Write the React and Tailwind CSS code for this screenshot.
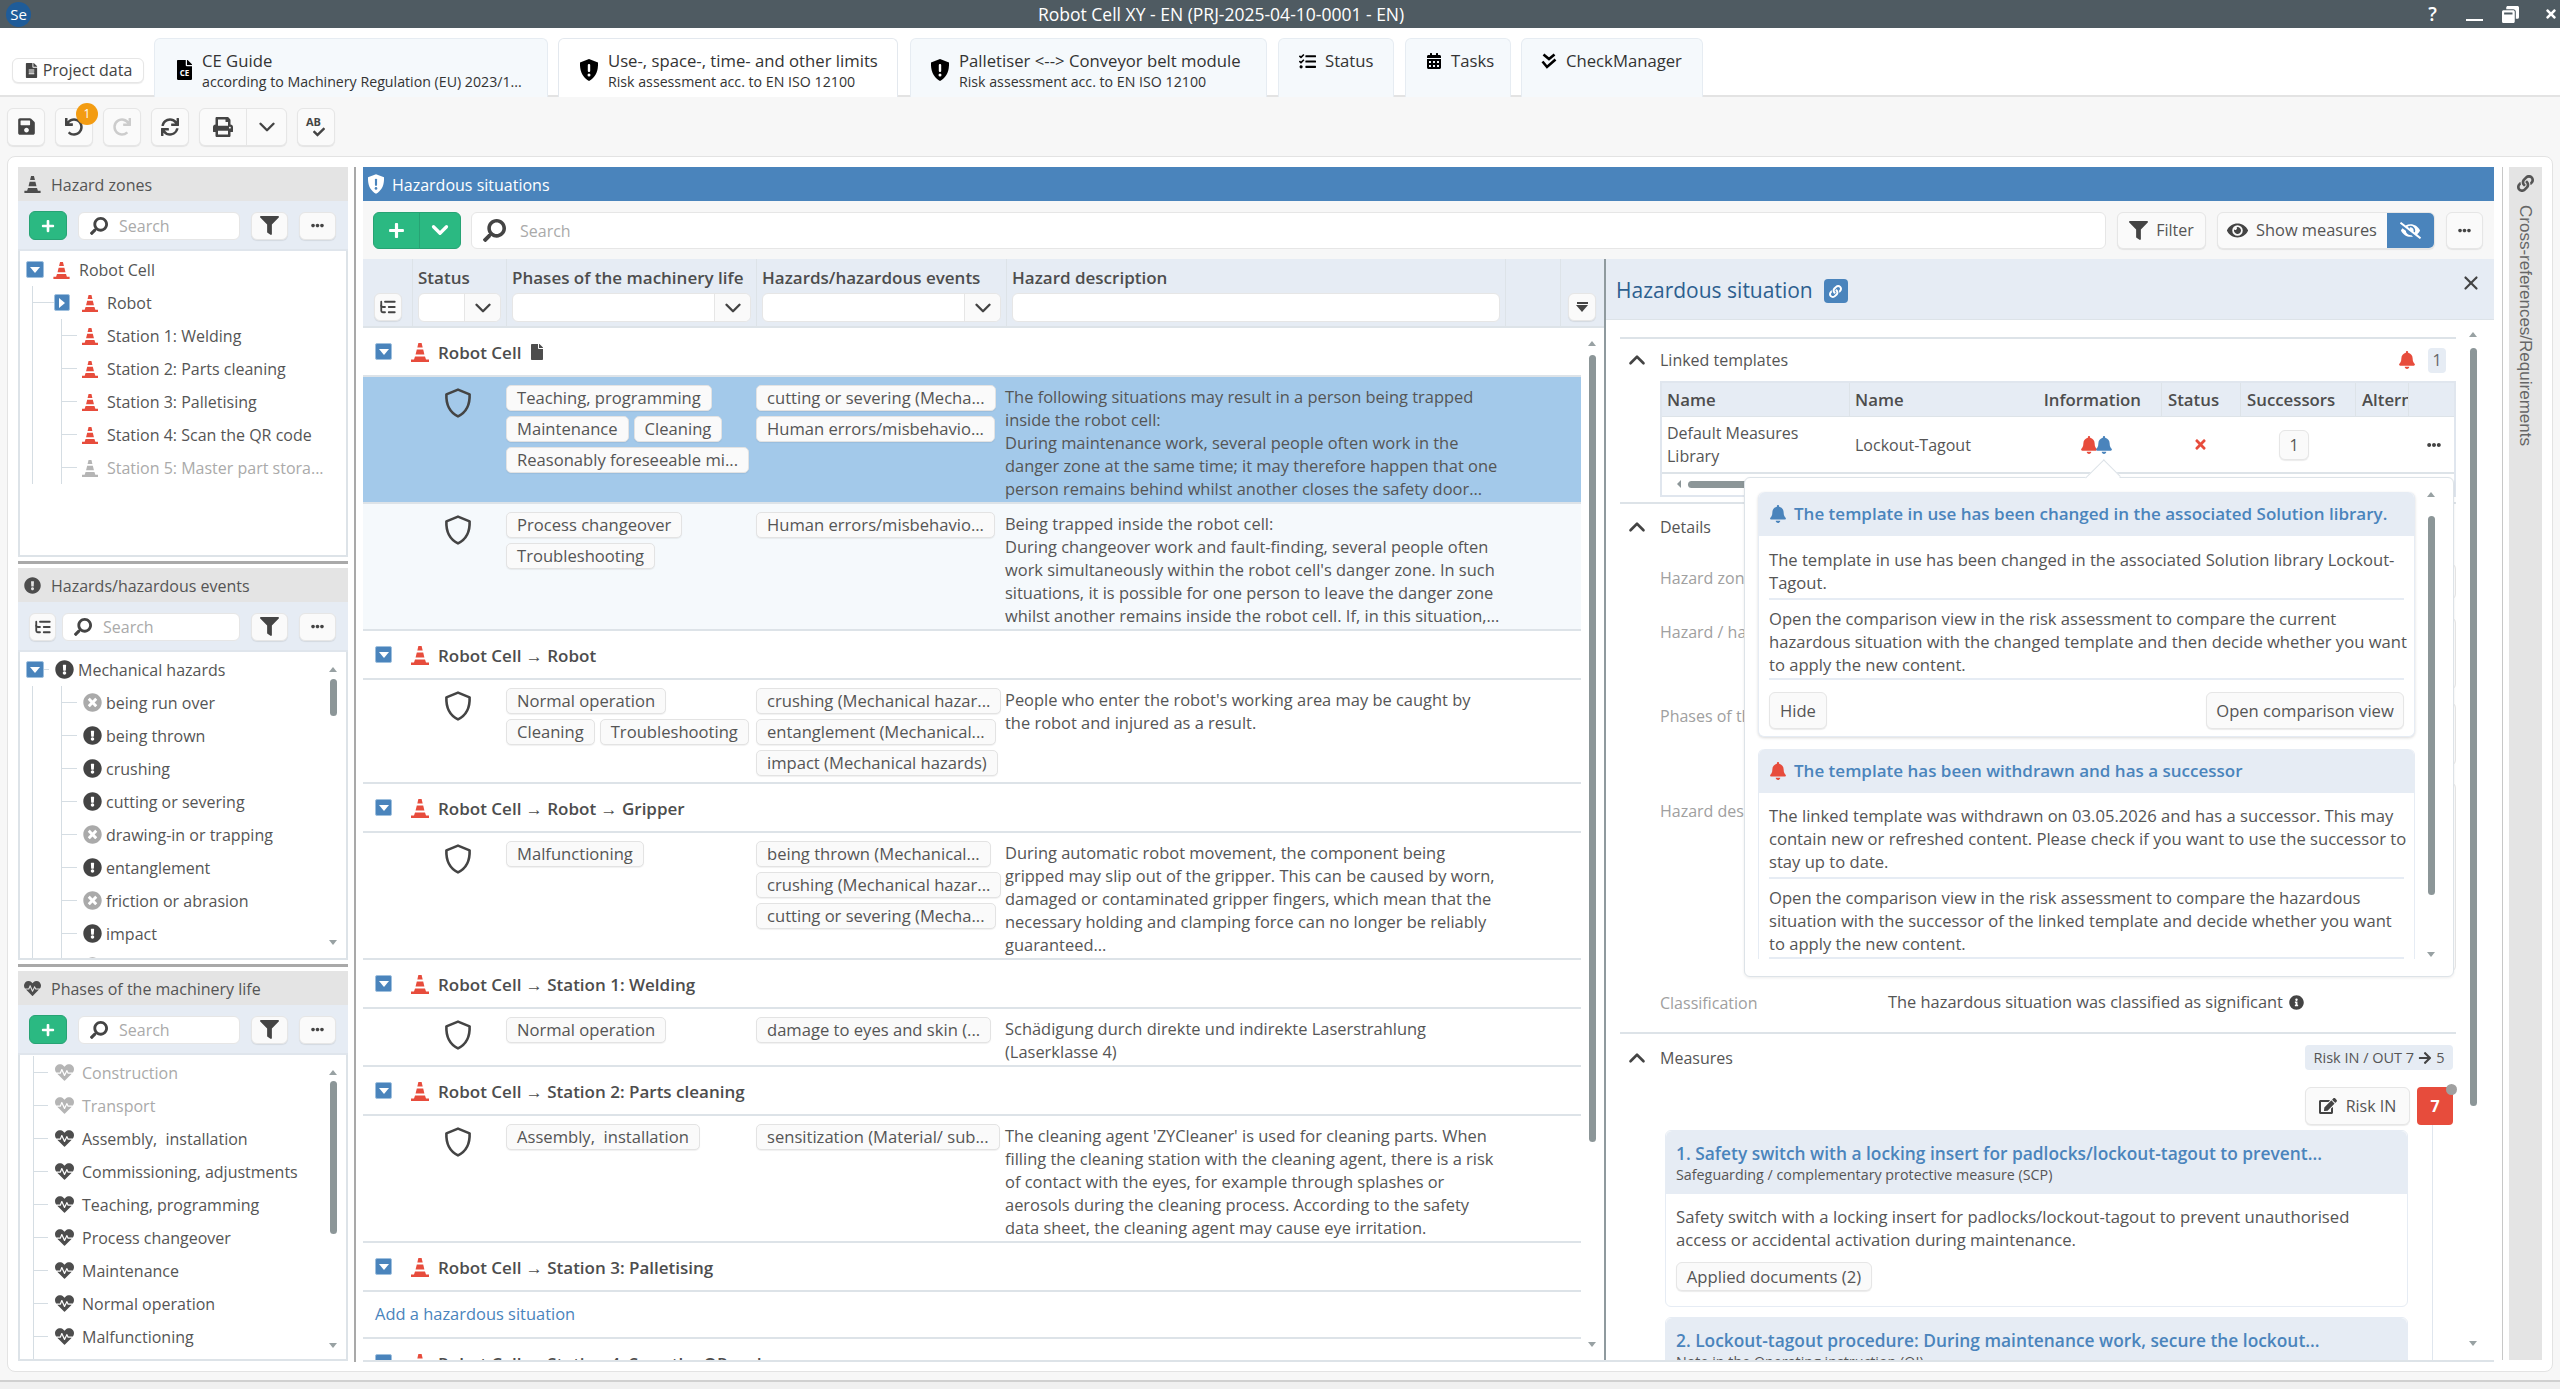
import {
  FaBell, FaCalendarAlt, FaEdit, FaEllipsisH, FaExclamationCircle, FaEye, FaEyeSlash, FaFile, FaFileAlt,
  FaFilter, FaHeartbeat, FaInfoCircle, FaLink, FaPlus, FaPrint, FaRedo, FaSave, FaSearch,
  FaSync, FaTasks, FaTimes, FaTimesCircle, FaUndo, FaArrowRight, FaCheck, FaWindowRestore,
} from "react-icons/fa";
import { ChevronDown, ChevronUp, ListTree, X } from "lucide-react";

const BTN = "flex items-center justify-center bg-[#fafafa] border border-[#e6e6e6] rounded-md shadow-[0_1px_1px_rgba(0,0,0,0.08)]";

function Cone({ className = "", gray = false, dark = false }) {
  const fill = gray ? "#b5b5b5" : dark ? "#4d4d4d" : "#e74c3c";
  return (
    <svg viewBox="0 0 18 20" className={className}>
      <path d="M7.4 1h3.2l1.1 4.5H6.3z" fill={fill} />
      <path d="M5.8 7.5h6.4l1.2 5H4.6z" fill={fill} />
      <path d="M4 14.5h10l1 3h3V20H0v-2.5h3z" fill={fill} />
    </svg>
  );
}

function ShieldOutline() {
  return (
    <svg viewBox="0 0 28 30" className="w-[28px] h-[30px]" fill="none" stroke="#444" strokeWidth="2.6" strokeLinejoin="round">
      <path d="M14 1.6 25.6 6.4C26 16 23 24 14 28.4 5 24 2 16 2.4 6.4z" />
    </svg>
  );
}

function Toggle({ className = "w-[18px] h-[17px]", closed = false }) {
  return (
    <span className={`${className} shrink-0 flex items-center justify-center bg-[#4a84bc] rounded-[2px] border border-[#9fc0de]`}>
      {closed
        ? <span className="w-0 h-0 border-y-[5px] border-y-transparent border-l-[6px] border-l-white" />
        : <span className="w-0 h-0 border-x-[5px] border-x-transparent border-t-[6px] border-t-white" />}
    </span>
  );
}

function SearchBox({ className = "", big = false }) {
  return (
    <div className={`flex items-center bg-white border border-[#e6e6e6] rounded-md ${className}`}>
      <FaSearch className={big ? "ml-[11px] text-[#444] text-[23px] scale-x-[-1]" : "ml-[11px] text-[#444] text-[18px] scale-x-[-1]"} />
      <span className={big ? "ml-[14px] pt-px text-[#aaa]" : "ml-[11px] pt-px text-[#aaa]"}>Search</span>
    </div>
  );
}

function ScrollBar({ thumbTop, thumbHeight, up, down, x = "right-[9px]", w = "w-[7px]" }) {
  return (
    <div className={`absolute top-0 bottom-0 ${x} flex justify-center ${w}`}>
      <span className="absolute -left-[1px] w-0 h-0 border-x-[4px] border-x-transparent border-b-[5px] border-b-[#98a1a3]" style={{ top: up }} />
      <span className={`absolute left-0 ${w} rounded bg-[#8c9698]`} style={{ top: thumbTop, height: thumbHeight }} />
      <span className="absolute -left-[1px] w-0 h-0 border-x-[4px] border-x-transparent border-t-[5px] border-t-[#98a1a3]" style={{ top: down }} />
    </div>
  );
}

function PanelHead({ icon, title, first, height = "h-[390px]", children, scroll }) {
  return (
    <div className={`${height} flex flex-col`}>
      <div className="h-[34px] shrink-0 flex items-center bg-[#e4e4e4] pl-[6px] gap-[10px] text-[#555]">
        {icon}
        <span className="pt-[2px]">{title}</span>
      </div>
      <div className="h-[50px] shrink-0 flex items-center bg-[#e6ecf4] pl-[11px] pr-[11px] pt-px border-b-[2px] border-[#dfe5ec]">
        {first}
        <div className={`${BTN} w-[37px] h-[28px] ml-[11px]`}><FaFilter className="text-[#444] text-[19px]" /></div>
        <div className={`${BTN} w-[37px] h-[28px] ml-[11px]`}><FaEllipsisH className="text-[#444] text-[13px]" /></div>
      </div>
      <div className="relative flex-1 overflow-hidden border-x-[2px] border-b-[2px] border-[#dde3e8] bg-white">
        {children}
        {scroll}
      </div>
    </div>
  );
}

function Dash({ w }) {
  return <span className={`${w} h-px bg-[#d5dde3] shrink-0`} />;
}

const PHASES = [
  ["Construction", true], ["Transport", true], ["Assembly,  installation"], ["Commissioning, adjustments"],
  ["Teaching, programming"], ["Process changeover"], ["Maintenance"], ["Normal operation"], ["Malfunctioning"],
];

const HAZARDS = [
  ["being run over", true], ["being thrown"], ["crushing"], ["cutting or severing"], ["drawing-in or trapping", true],
  ["entanglement"], ["friction or abrasion", true], ["impact"], ["", true],
];

const STATIONS = ["Station 1: Welding", "Station 2: Parts cleaning", "Station 3: Palletising", "Station 4: Scan the QR code"];

const GREEN_PLUS = (
  <div className="w-[38px] h-[29px] flex items-center justify-center rounded-md bg-[#2bb982] border border-[#27a374]">
    <FaPlus className="text-white text-[14px]" />
  </div>
);

function LeftColumn() {
  return (
    <div className="w-[330px] shrink-0 flex flex-col">
      <PanelHead
        title="Hazard zones"
        icon={<Cone dark className="w-[17px] h-[18px]" />}
        first={<>{GREEN_PLUS}<SearchBox className="w-[162px] h-[28px] ml-[11px]" /></>}
      >
        <div className="pt-[2px] pl-[6px] text-[#555]">
          <div className="flex items-center h-[33px]">
            <Toggle />
            <Cone className="ml-[9px] w-[17px] h-[18px]" />
            <span className="ml-[9px]">Robot Cell</span>
          </div>
          <div className="ml-[6px] border-l border-[#d5dde3]">
            <div className="flex items-center h-[33px]">
              <Dash w="w-[21px]" />
              <Toggle closed className="w-[16px] h-[17px]" />
              <Cone className="ml-[12px] w-[16px] h-[18px]" />
              <span className="ml-[9px]">Robot</span>
            </div>
            <div className="ml-[28px] border-l border-[#d5dde3]">
              {STATIONS.map((s) => (
                <div key={s} className="flex items-center h-[33px]">
                  <Dash w="w-[15px]" />
                  <Cone className="ml-[5px] w-[16px] h-[18px]" />
                  <span className="ml-[9px]">{s}</span>
                </div>
              ))}
              <div className="flex items-center h-[33px] text-[#aaa]">
                <Dash w="w-[15px]" />
                <Cone gray className="ml-[5px] w-[16px] h-[18px]" />
                <span className="ml-[9px]">Station 5: Master part stora...</span>
              </div>
            </div>
          </div>
        </div>
      </PanelHead>

      <div className="h-[3px] mt-[4px] mb-[4px] bg-[#a9a9a9]" />

      <PanelHead
        title="Hazards/hazardous events"
        height="h-[392px]"
        icon={<FaExclamationCircle className="text-[#4d4d4d] text-[17px]" />}
        first={<>
          <div className={`${BTN} w-[27px] h-[28px]`}><ListTree className="text-[#444] w-[18px] h-[18px]" strokeWidth={2.4} /></div>
          <SearchBox className="w-[178px] h-[28px] ml-[6px]" />
        </>}
        scroll={<ScrollBar up={15} thumbTop={27} thumbHeight={37} down={288} />}
      >
        <div className="pt-px pl-[6px] text-[#555]">
          <div className="flex items-center h-[33px]">
            <Toggle />
            <Dash w="w-[5px]" />
            <FaExclamationCircle className="ml-[6px] text-[#444] text-[19px]" />
            <span className="ml-[4px]">Mechanical hazards</span>
          </div>
          <div className="ml-[6px] border-l border-[#d5dde3]">
            <div className="ml-[28px] border-l border-[#d5dde3]">
              {HAZARDS.map(([h, off], i) => (
                <div key={i} className="flex items-center h-[33px]">
                  <Dash w="w-[15px]" />
                  {off
                    ? <FaTimesCircle className="ml-[6px] text-[#aaa] text-[19px]" />
                    : <FaExclamationCircle className="ml-[6px] text-[#444] text-[19px]" />}
                  <span className="ml-[4px]">{h}</span>
                </div>
              ))}
            </div>
          </div>
        </div>
      </PanelHead>

      <div className="h-[3px] mt-[4px] mb-[4px] bg-[#a9a9a9]" />

      <PanelHead
        title="Phases of the machinery life"
        icon={<FaHeartbeat className="text-[#4d4d4d] text-[17px]" />}
        first={<>{GREEN_PLUS}<SearchBox className="w-[162px] h-[28px] ml-[11px]" /></>}
        scroll={<ScrollBar up={15} thumbTop={26} thumbHeight={153} down={288} />}
      >
        <div className="pt-[1px] pl-[12px] text-[#555]">
          <div className="border-l border-[#d5dde3] ml-[1px]">
            {PHASES.map(([p, off]) => (
              <div key={p} className={`flex items-center h-[33px] ${off ? "text-[#aaa]" : ""}`}>
                <Dash w="w-[14px]" />
                <FaHeartbeat className={`ml-[7px] text-[19px] ${off ? "text-[#b5b5b5]" : "text-[#4d4d4d]"}`} />
                <span className="ml-[8px] whitespace-pre">{p}</span>
              </div>
            ))}
            <div className="h-[33px]" />
          </div>
        </div>
      </PanelHead>
    </div>
  );
}

function Tag({ children }) {
  return <span className="h-[26px] flex items-center px-[10px] bg-[#fafafa] border border-[#e3e3e3] rounded-[5px] whitespace-pre text-[16.6px] text-[#555] shadow-[0_1px_1px_rgba(0,0,0,0.06)]">{children}</span>;
}

function Group({ title, file }) {
  return (
    <div className="h-[49px] flex items-center pl-[12px] border-b-[2px] border-[#dde3e8] font-semibold text-[17px] text-[#4d4d4d]">
      <Toggle className="w-[17px] h-[17px]" />
      <Cone className="ml-[19px] w-[18px] h-[20px]" />
      <span className="ml-[9px] pt-[2px] whitespace-nowrap">{title}</span>
      {file && <FaFile className="ml-[8px] text-[#4d4d4d] text-[16px]" />}
    </div>
  );
}

function Row({ phases, hazards, lines, height, bg = "bg-white" }) {
  return (
    <div className={`${height} ${bg} flex pt-[8px] border-b-[2px] border-[#dde3e8]`}>
      <div className="w-[143px] shrink-0 pl-[81px] pt-[3px]"><ShieldOutline /></div>
      <div className="w-[250px] shrink-0 flex flex-wrap content-start gap-[5px]">
        {phases.map((t) => <Tag key={t}>{t}</Tag>)}
      </div>
      <div className="w-[249px] shrink-0 flex flex-col items-start gap-[5px]">
        {hazards.map((t) => <Tag key={t}>{t}</Tag>)}
      </div>
      <div className="leading-[23px] text-[16.45px] text-[#555] whitespace-nowrap">
        {lines.map((l) => <div key={l}>{l}</div>)}
      </div>
    </div>
  );
}

function HeadCell({ w, title, border = true, children }) {
  return (
    <div className={`${w} shrink-0 h-full ${border ? "border-r border-[#dde3e8]" : ""} flex flex-col px-[5px]`}>
      <div className="h-[34px] flex items-center pt-[4px] font-semibold text-[17px] text-[#4d4d4d] whitespace-nowrap">{title}</div>
      {children}
    </div>
  );
}

function Combo({ w, text = "" }) {
  return (
    <div className={`${w} h-[29px] flex bg-white border border-[#e6e6e6] rounded-md`}>
      <span className="flex-1">{text}</span>
      <span className="w-[36px] flex items-center justify-center bg-[#fafafa] border-l border-[#e6e6e6] rounded-r-md">
        <ChevronDown className="text-[#444] w-[26px] h-[26px]" strokeWidth={2.2} />
      </span>
    </div>
  );
}

function HazardTable() {
  return (
    <div className="w-[1241px] shrink-0 flex flex-col">
      <div className="h-[69px] shrink-0 flex bg-[#e6ecf4] border-b-[2px] border-[#dde3e8]">
        <div className="w-[50px] shrink-0 h-full border-r border-[#dde3e8] pl-[11px] pt-[34px]">
          <div className={`${BTN} w-[28px] h-[28px]`}><ListTree className="text-[#444] w-[18px] h-[18px]" strokeWidth={2.4} /></div>
        </div>
        <HeadCell w="w-[94px]" title="Status"><Combo w="w-[83px]" /></HeadCell>
        <HeadCell w="w-[250px]" title="Phases of the machinery life"><Combo w="w-[239px]" /></HeadCell>
        <HeadCell w="w-[250px]" title="Hazards/hazardous events"><Combo w="w-[239px]" /></HeadCell>
        <HeadCell w="w-[499px]" title="Hazard description">
          <div className="w-[488px] h-[29px] bg-white border border-[#e6e6e6] rounded-md" />
        </HeadCell>
        <div className="w-[55px] shrink-0 h-full border-r border-[#dde3e8]" />
        <div className="flex-1 pl-[7px] pt-[34px]">
          <div className={`${BTN} flex-col w-[28px] h-[28px]`}>
            <span className="w-[11px] h-[2px] bg-[#444]" />
            <span className="mt-px w-0 h-0 border-x-[6px] border-x-transparent border-t-[7px] border-t-[#444]" />
          </div>
        </div>
      </div>

      <div className="relative flex-1 overflow-hidden">
        <div className="w-[1218px]">
          <Group title="Robot Cell" file />
          <Row
            height="h-[127px]"
            bg="bg-[#a3c9ea]"
            phases={["Teaching, programming", "Maintenance", "Cleaning", "Reasonably foreseeable mi..."]}
            hazards={["cutting or severing (Mecha...", "Human errors/misbehavio..."]}
            lines={[
              "The following situations may result in a person being trapped",
              "inside the robot cell:",
              "During maintenance work, several people often work in the",
              "danger zone at the same time; it may therefore happen that one",
              "person remains behind whilst another closes the safety door...",
            ]}
          />
          <Row
            height="h-[127px]"
            bg="bg-[#f5f9fc]"
            phases={["Process changeover", "Troubleshooting"]}
            hazards={["Human errors/misbehavio..."]}
            lines={[
              "Being trapped inside the robot cell:",
              "During changeover work and fault-finding, several people often",
              "work simultaneously within the robot cell's danger zone. In such",
              "situations, it is possible for one person to leave the danger zone",
              "whilst another remains inside the robot cell. If, in this situation,...",
            ]}
          />
          <Group title="Robot Cell → Robot" />
          <Row
            height="h-[104px]"
            phases={["Normal operation", "Cleaning", "Troubleshooting"]}
            hazards={["crushing (Mechanical hazar...", "entanglement (Mechanical...", "impact (Mechanical hazards)"]}
            lines={[
              "People who enter the robot's working area may be caught by",
              "the robot and injured as a result.",
            ]}
          />
          <Group title="Robot Cell → Robot → Gripper" />
          <Row
            height="h-[127px]"
            phases={["Malfunctioning"]}
            hazards={["being thrown (Mechanical...", "crushing (Mechanical hazar...", "cutting or severing (Mecha..."]}
            lines={[
              "During automatic robot movement, the component being",
              "gripped may slip out of the gripper. This can be caused by worn,",
              "damaged or contaminated gripper fingers, which mean that the",
              "necessary holding and clamping force can no longer be reliably",
              "guaranteed...",
            ]}
          />
          <Group title="Robot Cell → Station 1: Welding" />
          <Row
            height="h-[58px]"
            phases={["Normal operation"]}
            hazards={["damage to eyes and skin (..."]}
            lines={["Schädigung durch direkte und indirekte Laserstrahlung", "(Laserklasse 4)"]}
          />
          <Group title="Robot Cell → Station 2: Parts cleaning" />
          <Row
            height="h-[127px]"
            phases={["Assembly,  installation"]}
            hazards={["sensitization (Material/ sub..."]}
            lines={[
              "The cleaning agent 'ZYCleaner' is used for cleaning parts. When",
              "filling the cleaning station with the cleaning agent, there is a risk",
              "of contact with the eyes, for example through splashes or",
              "aerosols during the cleaning process. According to the safety",
              "data sheet, the cleaning agent may cause eye irritation.",
            ]}
          />
          <Group title="Robot Cell → Station 3: Palletising" />
          <div className="h-[47px] flex items-center pl-[12px] border-b-[2px] border-[#dde3e8] text-[16.45px] text-[#4a84bc]">Add a hazardous situation</div>
          <Group title="Robot Cell → Station 4: Scan the QR code" />
        </div>
        <ScrollBar x="right-[8px]" up={13} thumbTop={27} thumbHeight={787} down={1014} />
      </div>
    </div>
  );
}

function Section({ title, height, head = "h-[45px]", right, children }) {
  return (
    <div className={`${height} border-b-[2px] border-[#dde3e8] ml-[14px] w-[836px] relative`}>
      <div className={`${head} flex items-center`}>
        <ChevronUp className="w-[26px] h-[26px] text-[#444] ml-[4px]" strokeWidth={2.4} />
        <span className="ml-[10px] text-[#555]">{title}</span>
        <div className="ml-auto">{right}</div>
      </div>
      {children}
    </div>
  );
}

function Field({ label, top, h, labelTop }) {
  return (
    <>
      <div className="absolute left-[40px] text-[#a0a0a0]" style={{ top: labelTop }}>{label}</div>
      <div className="absolute left-[260px] w-[576px] border border-[#e6e6e6] rounded-md" style={{ top, height: h }} />
    </>
  );
}

function NoticeHead({ color, children }) {
  return (
    <div className="flex items-center bg-[#e6ecf4] rounded-t-md h-full pl-[10px]">
      <FaBell className={`${color} text-[18px]`} />
      <span className="ml-[7px] font-semibold text-[17px] text-[#4a84bc] whitespace-nowrap">{children}</span>
    </div>
  );
}

function Popover() {
  return (
    <div className="absolute left-[138px] top-[218px] w-[710px] h-[500px] bg-white border border-[#dde3e8] rounded-md shadow-[0_1px_3px_rgba(0,0,0,0.08)]">
      <div className="absolute -top-[13px] left-[346px] w-[24px] h-[24px] rotate-45 scale-y-[1.1] bg-white border-l border-t border-[#dde3e8]" />
      <div className="relative h-[489px] overflow-hidden pt-[14px] pl-[13px] text-[16.6px] text-[#555]">
        <div className="w-[657px] h-[245px] border-x border-b border-[#e6ecf4] rounded-md shadow-[0_1px_3px_rgba(0,0,0,0.15)] bg-white">
          <div className="h-[44px]"><NoticeHead color="text-[#4a84bc]">The template in use has been changed in the associated Solution library.</NoticeHead></div>
          <div className="px-[10px] leading-[23px] whitespace-nowrap">
            <div className="pt-[12px] pb-[4px] border-b-[2px] border-[#e6ecf4]">
              <div>The template in use has been changed in the associated Solution library Lockout-</div>
              <div>Tagout.</div>
            </div>
            <div className="pt-[7px] pb-[2px] border-b-[2px] border-[#e6ecf4]">
              <div>Open the comparison view in the risk assessment to compare the current</div>
              <div>hazardous situation with the changed template and then decide whether you want</div>
              <div>to apply the new content.</div>
            </div>
            <div className="flex justify-between mt-[12px]">
              <div className={`${BTN} w-[58px] h-[37px]`}>Hide</div>
              <div className={`${BTN} w-[198px] h-[37px]`}>Open comparison view</div>
            </div>
          </div>
        </div>
        <div className="w-[657px] mt-[12px] border-x border-[#e6ecf4] rounded-t-md bg-white">
          <div className="h-[44px]"><NoticeHead color="text-[#e74c3c]">The template has been withdrawn and has a successor</NoticeHead></div>
          <div className="px-[10px] leading-[23px] whitespace-nowrap">
            <div className="pt-[11px] pb-[4px] border-b-[2px] border-[#e6ecf4]">
              <div>The linked template was withdrawn on 03.05.2026 and has a successor. This may</div>
              <div>contain new or refreshed content. Please check if you want to use the successor to</div>
              <div>stay up to date.</div>
            </div>
            <div className="pt-[7px] pb-[2px] border-b-[2px] border-[#e6ecf4]">
              <div>Open the comparison view in the risk assessment to compare the hazardous</div>
              <div>situation with the successor of the linked template and decide whether you want</div>
              <div>to apply the new content.</div>
            </div>
          </div>
        </div>
        <ScrollBar x="right-[18px]" up={14} thumbTop={38} thumbHeight={379} down={474} />
      </div>
    </div>
  );
}

function Measure({ title, sub, children, height }) {
  return (
    <div className={`${height} w-[743px] ml-[59px] border border-[#e6ecf4] rounded-md mb-[10px]`}>
      <div className="h-[63px] bg-[#e6ecf4] rounded-t-md px-[10px] pt-[10px]">
        <div className="font-semibold text-[17.35px] leading-[24px] text-[#4a84bc] whitespace-nowrap">{title}</div>
        <div className="text-[14.3px] leading-[20px] text-[#555] whitespace-nowrap">{sub}</div>
      </div>
      {children}
    </div>
  );
}

function DetailPanel() {
  return (
    <div className="relative flex-1 border-l-[2px] border-[#8f9a9e] overflow-hidden">
      <div className="h-[61px] flex items-center bg-[#e6ecf4] pl-[10px] pr-[12px] pt-[4px] border-b border-[#dde3e8]">
        <span className="text-[21px] text-[#2d5f8f]">Hazardous situation</span>
        <span className="ml-[11px] w-[24px] h-[24px] rounded bg-[#4a84bc] flex items-center justify-center"><FaLink className="text-white text-[13px]" /></span>
        <X className="ml-auto -mt-[16px] text-[#444] w-[22px] h-[22px]" strokeWidth={2.4} />
      </div>
      <div className="h-[17px]" />
      <div className="border-t-[2px] border-[#dde3e8] ml-[14px] w-[836px]" />
      <Section
        title="Linked templates"
        height="h-[165px]"
        head="h-[42px]"
        right={
          <div className="flex items-center gap-[12px] pr-[10px]">
            <FaBell className="text-[#e74c3c] text-[18px]" />
            <span className="w-[18px] h-[25px] rounded bg-[#e6ecf4] flex items-center justify-center text-[#666]">1</span>
          </div>
        }
      >
        <div className="ml-[40px] w-[796px] border-2 border-[#e0e6ee] h-[116px] text-[#555]">
          <div className="h-[33px] flex bg-[#e6ecf4] font-semibold text-[#4d4d4d] whitespace-nowrap text-[16.8px]">
            <div className="w-[188px] pl-[5px] flex items-center border-r border-[#dde3e8]">Name</div>
            <div className="w-[312px] pl-[5px] flex items-center justify-between pr-[20px] border-r border-[#dde3e8]"><span>Name</span><span>Information</span></div>
            <div className="w-[79px] pl-[6px] flex items-center border-r border-[#dde3e8]">Status</div>
            <div className="w-[115px] pl-[6px] flex items-center border-r border-[#dde3e8]">Successors</div>
            <div className="w-[53px] pl-[6px] flex items-center border-r border-[#dde3e8] overflow-hidden">Alternatives</div>
          </div>
          <div className="h-[58px] flex items-center border-b-[2px] border-t border-[#dde3e8]">
            <div className="w-[188px] pl-[5px] leading-[23px]">Default Measures<br />Library</div>
            <div className="w-[187px] pl-[5px]">Lockout-Tagout</div>
            <div className="w-[125px] flex items-center pl-[43px]">
              <FaBell className="text-[#e74c3c] text-[18px]" />
              <FaBell className="text-[#4a84bc] text-[18px] -ml-[3px]" />
            </div>
            <div className="w-[79px] pl-[31px]"><FaTimes className="text-[#e74c3c] text-[15px]" /></div>
            <div className="w-[115px] pl-[38px]"><span className={`${BTN} w-[30px] h-[30px]`}>1</span></div>
            <div className="ml-auto pr-[13px]"><FaEllipsisH className="text-[#444] text-[14px]" /></div>
          </div>
          <div className="h-[20px] flex items-center pl-[15px]">
            <span className="w-0 h-0 border-y-[4px] border-y-transparent border-r-[4px] border-r-[#8c9698]" />
            <span className="ml-[7px] w-[60px] h-[7px] rounded bg-[#8c9698]" />
          </div>
        </div>
      </Section>
      <Section title="Details" height="h-[530px]">
        <Field label="Hazard zone" labelTop={62} top={59} h={37} />
        <Field label="Hazard / hazardous event" labelTop={116} top={113} h={73} />
        <Field label="Phases of the machinery life" labelTop={200} top={198} h={64} />
        <Field label="Hazard description" labelTop={295} top={278} h={190} />
        <div className="absolute left-[40px] top-[487px] text-[#a0a0a0]">Classification</div>
        <div className="absolute left-[268px] top-[486px] flex items-center text-[16.4px] text-[#555] whitespace-nowrap">
          The hazardous situation was classified as significant
          <FaInfoCircle className="ml-[6px] text-[#444] text-[15px]" />
        </div>
      </Section>
      <div className="ml-[14px] w-[838px] flex items-center h-[47px]">
        <ChevronUp className="w-[26px] h-[26px] text-[#444] ml-[4px]" strokeWidth={2.4} />
        <span className="ml-[10px] text-[#555]">Measures</span>
        <span className="ml-auto mr-[5px] h-[25px] w-[148px] rounded bg-[#e6ecf4] flex items-center justify-center text-[14.5px] text-[#555] whitespace-nowrap">
          Risk IN / OUT 7 <FaArrowRight className="mx-[4px] text-[#444] text-[14px]" /> 5
        </span>
      </div>
      <div className="relative">
        <div className="ml-[699px] flex h-[38px] gap-[7px] mt-[6px]">
          <div className={`${BTN} w-[105px] h-[38px] text-[#555] gap-[9px]`}><FaEdit className="text-[#444] text-[18px]" />Risk IN</div>
          <div className="relative w-[36px] h-[38px] rounded bg-[#e74c3c] flex items-center justify-center font-bold text-white">
            7
            <span className="absolute -top-[3px] -right-[4px] w-[11px] h-[11px] rounded-full bg-[#a0a0a0]" />
          </div>
        </div>
        <div className="absolute left-[826px] top-[38px] h-[300px] w-px bg-[#e0e6ee]" />
        <div className="h-[5px]" />
        <Measure
          height="h-[177px]"
          title="1. Safety switch with a locking insert for padlocks/lockout-tagout to prevent..."
          sub="Safeguarding / complementary protective measure (SCP)"
        >
          <div className="px-[10px] pt-[11px] leading-[23px] text-[16.7px] text-[#555] whitespace-nowrap">
            <div>Safety switch with a locking insert for padlocks/lockout-tagout to prevent unauthorised</div>
            <div>access or accidental activation during maintenance.</div>
            <div className={`${BTN} w-[196px] h-[29px] mt-[11px]`}>Applied documents (2)</div>
          </div>
        </Measure>
        <Measure
          height="h-[177px]"
          title="2. Lockout-tagout procedure: During maintenance work, secure the lockout..."
          sub="Note in the Operating instruction (OI)"
        />
      </div>
      <div className="absolute right-[17px] top-0 bottom-0 w-[7px]">
        <ScrollBar x="right-0" up={73} thumbTop={89} thumbHeight={758} down={1082} />
      </div>
      <Popover />
    </div>
  );
}

function CheckManagerIcon() {
  return (
    <svg viewBox="0 0 16 18" className="w-[16px] h-[18px]" fill="none" stroke="#000" strokeWidth="2.6">
      <path d="M2.5 2.5 8 7l5.5-4.5" />
      <path d="M1.5 9.5 6 15 14.5 7.5" />
    </svg>
  );
}

export default function App() {
  return (
    <div className="w-[2560px] h-[1389px] overflow-hidden bg-white flex flex-col font-['Open_Sans',sans-serif] text-[16px] text-[#444]">
      {/* Title bar */}
      <div className="h-[28px] shrink-0 flex items-center bg-[#4f5b62] text-white">
        <span className="ml-[6px] w-[25px] h-[25px] rounded-full bg-[#1f5c99] flex items-center justify-center text-[15px] text-white">Se</span>
        <span className="ml-[1007px] text-[17.5px] whitespace-nowrap">Robot Cell XY - EN (PRJ-2025-04-10-0001 - EN)</span>
        <span className="ml-[1024px] text-[19px] font-semibold">?</span>
        <span className="ml-[29px] w-[17px] h-[2px] mt-[11px] bg-white" />
        <FaWindowRestore className="ml-[19px] text-white text-[17px]" />
        <FaTimes className="ml-[25px] text-white text-[14px]" />
      </div>

      {/* Tabs */}
      <div className="h-[69px] shrink-0 flex items-end pl-[12px] bg-white border-b-[2px] border-[#e3e3e3]">
        <div className={`${BTN} h-[25px] w-[132px] self-center mt-[17px] gap-[4px] bg-white`}>
          <FaFileAlt className="text-[#444] text-[15px]" />Project data
        </div>
        <Tab w="w-[394px] ml-[10px]" icon={<CeFile />} title="CE Guide" sub="according to Machinery Regulation (EU) 2023/1..." pl="pl-[22px]" />
        <Tab active w="w-[340px] ml-[10px]" icon={<ShieldFill />} title="Use-, space-, time- and other limits" sub="Risk assessment acc. to EN ISO 12100" pl="pl-[21px]" />
        <Tab w="w-[357px] ml-[12px]" icon={<ShieldFill />} title="Palletiser <--> Conveyor belt module" sub="Risk assessment acc. to EN ISO 12100" pl="pl-[20px]" />
        <Tab w="w-[116px] ml-[11px]" icon={<FaTasks className="text-black text-[17px]" />} title="Status" pl="pl-[20px]" small />
        <Tab w="w-[106px] ml-[11px]" icon={<FaCalendarAlt className="text-black text-[16px]" />} title="Tasks" pl="pl-[20px]" small />
        <Tab w="w-[182px] ml-[10px]" icon={<CheckManagerIcon />} title="CheckManager" pl="pl-[19px]" small />
      </div>

      {/* Toolbar */}
      <div className="h-[59px] shrink-0 flex items-center gap-[10px] pl-[7px] bg-[#f7f7f7]">
        <div className={`${BTN} w-[38px] h-[38px]`}><FaSave className="text-[#444] text-[19px]" /></div>
        <div className={`${BTN} relative w-[38px] h-[38px]`}>
          <FaUndo className="text-[#444] text-[18px]" />
          <span className="absolute -top-[6px] left-[20px] w-[22px] h-[22px] rounded-full bg-[#f39c12] text-white text-[12px] flex items-center justify-center">1</span>
        </div>
        <div className={`${BTN} w-[38px] h-[38px]`}><FaRedo className="text-[#ccc] text-[18px]" /></div>
        <div className={`${BTN} w-[38px] h-[38px]`}><FaSync className="text-[#444] text-[18px]" /></div>
        <div className={`${BTN} w-[88px] h-[38px]`}>
          <span className="w-[47px] h-full flex items-center justify-center border-r border-[#e6e6e6]"><FaPrint className="text-[#444] text-[20px]" /></span>
          <span className="flex-1 flex justify-center"><ChevronDown className="text-[#444] w-[26px] h-[26px]" strokeWidth={2.2} /></span>
        </div>
        <div className={`${BTN} relative flex-col w-[38px] h-[38px]`}>
          <span className="text-[11px] leading-[11px] font-bold text-[#444] -ml-[5px]">AB</span>
          <FaCheck className="text-[#444] text-[12px] ml-[5px] -mt-[1px]" />
        </div>
      </div>

      {/* Main card */}
      <div className="bg-[#f7f7f7] flex-1 flex flex-col">
        <div className="ml-[7px] w-[2546px] h-[1216px] shrink-0 flex bg-white border border-[#e3e3e3] rounded-lg pt-[10px] pl-[10px]">
          <LeftColumn />
          <div className="w-[2px] ml-[6px] mr-[7px] h-[1195px] bg-[#a9a9a9]" />
          <div className="w-[2131px] h-[1195px] shrink-0 flex flex-col border-b-[2px] border-[#dde3e8]">
            <div className="h-[34px] shrink-0 flex items-center bg-[#4a84bc] text-white pl-[5px] gap-[8px]">
              <ShieldWhite />
              <span className="pt-[2px]">Hazardous situations</span>
            </div>
            <div className="h-[58px] shrink-0 flex items-center pl-[10px] bg-[#f7f7f7]">
              <div className="w-[88px] h-[37px] flex rounded-md bg-[#2bb982] border border-[#27a374]">
                <span className="w-[46px] flex items-center justify-center border-r border-[#27a374]"><FaPlus className="text-white text-[17px]" /></span>
                <span className="flex-1 flex items-center justify-center"><ChevronDown className="text-white w-[26px] h-[26px]" strokeWidth={3} /></span>
              </div>
              <SearchBox big className="w-[1635px] h-[37px] ml-[10px]" />
              <div className={`${BTN} w-[89px] h-[37px] ml-[11px] gap-[8px] text-[#555]`}><FaFilter className="text-[#444] text-[19px]" />Filter</div>
              <div className={`${BTN} w-[218px] h-[37px] ml-[11px] justify-start text-[#555] overflow-hidden`}>
                <FaEye className="ml-[9px] text-[#444] text-[21px]" />
                <span className="ml-[8px] text-[16.4px]">Show measures</span>
                <span className="ml-auto w-[47px] h-full flex items-center justify-center bg-[#4a84bc]"><FaEyeSlash className="text-white text-[21px]" /></span>
              </div>
              <div className={`${BTN} w-[37px] h-[37px] ml-[11px]`}><FaEllipsisH className="text-[#444] text-[13px]" /></div>
            </div>
            <div className="flex-1 flex min-h-0">
              <HazardTable />
              <DetailPanel />
            </div>
          </div>
          <div className="w-px ml-[8px] h-[1193px] bg-[#c8c8c8]" />
          <div className="w-[33px] ml-[6px] h-[1193px] bg-[#e4e4e4] flex flex-col items-center pt-[8px]">
            <FaLink className="text-[#555] text-[17px]" />
            <span className="mt-[13px] [writing-mode:vertical-rl] font-['Liberation_Sans',sans-serif] text-[17px] text-[#666] whitespace-nowrap">Cross-references/Requirements</span>
          </div>
        </div>
        <div className="mt-[8px] border-t-[2px] border-[#d0d0d0] flex-1 bg-[#f0f0f0]" />
      </div>
    </div>
  );
}

function Tab({ active, w, icon, title, sub, pl, small }) {
  return (
    <div className={`${w} h-[59px] -mb-[2px] flex ${small ? "items-start pt-[10px]" : "items-center pt-[4px]"} ${pl} border-x border-t ${active ? "bg-white border-[#e3e8ee]" : "bg-[#f5f9fc] border-[#e6ecf2]"} rounded-t-md text-[16.7px] text-[#333] whitespace-nowrap`}>
      <span className="shrink-0 flex items-center h-[24px]">{icon}</span>
      <div className={small ? "ml-[9px]" : "ml-[10px]"}>
        <div className="leading-[23px]">{title}</div>
        {sub && <div className="text-[14.2px] leading-[20px]">{sub}</div>}
      </div>
    </div>
  );
}

function CeFile() {
  return (
    <span className="relative flex w-[15px] h-[20px]">
      <FaFile className="text-black text-[20px]" />
      <span className="absolute left-0 right-0 top-[8px] text-center text-[8px] leading-[10px] font-bold text-white">CE</span>
    </span>
  );
}

function ShieldFill() {
  return (
    <svg viewBox="0 0 18 22" className="w-[18px] h-[22px]">
      <path d="M9 0 18 3.5C18.4 12 15.5 18.5 9 22 2.5 18.5-.4 12 0 3.5z" fill="#000" />
      <rect x="7.8" y="5" width="2.4" height="8" rx="1" fill="#fff" />
      <circle cx="9" cy="16" r="1.5" fill="#fff" />
    </svg>
  );
}

function ShieldWhite() {
  return (
    <svg viewBox="0 0 18 22" className="w-[16px] h-[20px]">
      <path d="M9 0 18 3.5C18.4 12 15.5 18.5 9 22 2.5 18.5-.4 12 0 3.5z" fill="#fff" />
      <rect x="7.8" y="5" width="2.4" height="8" rx="1" fill="#4a84bc" />
      <circle cx="9" cy="16" r="1.5" fill="#4a84bc" />
    </svg>
  );
}
